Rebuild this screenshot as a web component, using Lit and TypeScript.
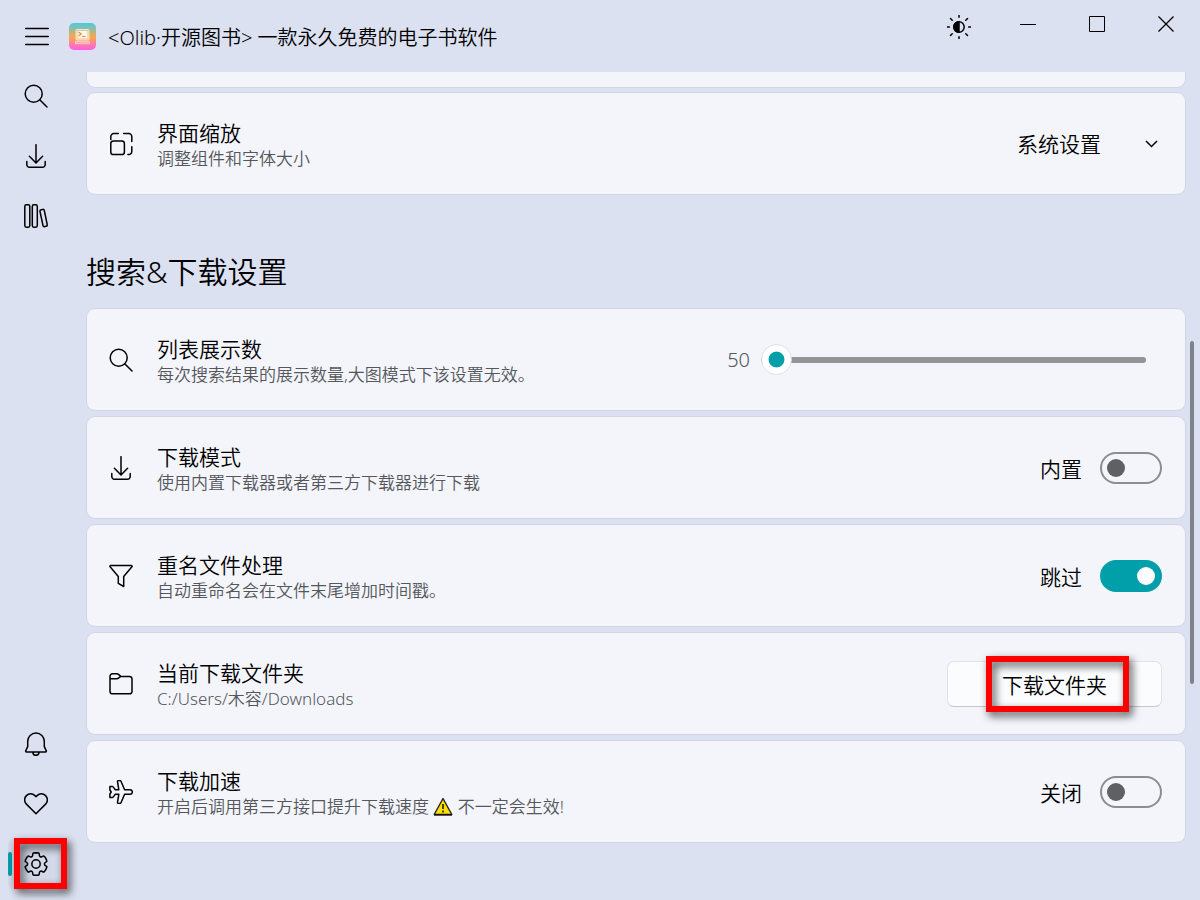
import { LitElement, html, svg, css, nothing } from "lit";
import { customElement, property, state } from "lit/decorators.js";
import { classMap } from "lit/directives/class-map.js";

const GEAR =
  "M12 2.25c.74 0 1.47.1 2.18.25.32.07.55.33.59.65l.17 1.53a1.38 1.38 0 0 0 1.92 1.11l1.4-.61a.75.75 0 0 1 .85.17 9.8 9.8 0 0 1 2.2 3.8c.1.3 0 .63-.27.83l-1.24.92a1.38 1.38 0 0 0 0 2.22l1.24.91c.26.2.37.53.27.83a9.8 9.8 0 0 1-2.2 3.8.75.75 0 0 1-.85.17l-1.4-.62a1.38 1.38 0 0 0-1.92 1.12l-.17 1.52a.75.75 0 0 1-.57.65 9.52 9.52 0 0 1-4.4 0 .75.75 0 0 1-.57-.65l-.17-1.52a1.38 1.38 0 0 0-1.92-1.12l-1.4.62a.75.75 0 0 1-.85-.17 9.8 9.8 0 0 1-2.2-3.8c-.1-.3 0-.63.27-.83l1.24-.91a1.38 1.38 0 0 0 0-2.22l-1.24-.92c-.27-.2-.37-.53-.27-.83a9.8 9.8 0 0 1 2.2-3.8.75.75 0 0 1 .85-.17l1.4.61a1.38 1.38 0 0 0 1.92-1.11l.17-1.53c.04-.32.27-.58.59-.65.71-.15 1.44-.24 2.18-.25z";

const ICONS: Record<string, unknown> = {
  menu: svg`<path d="M.7 4.500h22.600M.7 12.500h22.600M.7 20.500h22.600"/>`,
  search: svg`<circle cx="9.700" cy="9.700" r="8.500"/><path d="M16 16l7 7"/>`,
  download: svg`<path d="M12 .7v18.400M5.400 12.300l6.600 6.800 6.600-6.800M2.800 17.500v3.100a2.600 2.600 0 0 0 2.600 2.600h13.200a2.600 2.600 0 0 0 2.600-2.600v-3.100"/>`,
  library: svg`<rect x=".8" y=".8" width="5" height="22.400" rx="1.600"/><rect x="8.300" y=".8" width="5" height="22.400" rx="1.600"/><path d="M17.100 5.700l1.600-.3a1.400 1.400 0 0 1 1.600 1.100l2.900 14a1.500 1.500 0 0 1-1.100 1.800l-1.300.3a1.500 1.500 0 0 1-1.800-1.100L16 7.500a1.500 1.500 0 0 1 1.100-1.800z"/>`,
  bell: svg`<path d="M12 1a8.300 8.300 0 0 0-8.300 8.300v5.400l-2 4.100a.8.8 0 0 0 .7 1.100h19.200a.8.8 0 0 0 .7-1.100l-2-4.100V9.300A8.300 8.300 0 0 0 12 1zM8.900 20.200a3.100 3.100 0 0 0 6.200 0"/>`,
  heart: svg`<path d="M12 21.800L2.400 12.100a6 6 0 0 1 0-8.500 6 6 0 0 1 8.500 0L12 4.700l1.100-1.100a6 6 0 0 1 8.500 8.500z"/>`,
  gear: svg`<g transform="translate(-1.9 -1.9) scale(1.16)"><path d=${GEAR} stroke-width="1.3"/><circle cx="12" cy="12" r="3.6" stroke-width="1.3"/></g>`,
  scale: svg`<path d="M1.800 7.600V4.600a3 3 0 0 1 3-3h4.600M14.600 1.600h5.200a3 3 0 0 1 3 3v4.800M22.800 14.800v4.800a3 3 0 0 1-3 3h-.9"/><rect x="1.800" y="9" width="13.600" height="13.600" rx="2.600"/>`,
  filter: svg`<path d="M1.700 1.500h20.600a.8.8 0 0 1 .6 1.300l-8.200 9.600v10.100l-5.400-3.200v-6.900L1.100 2.800a.8.8 0 0 1 .6-1.300z"/>`,
  folder: svg`<path d="M1 6.200V4.400a2.600 2.600 0 0 1 2.600-2.600h4.200a2.600 2.600 0 0 1 1.700.6l2.300 2h8.600A2.600 2.600 0 0 1 23 7v12.200a2.600 2.600 0 0 1-2.600 2.600H3.600A2.600 2.600 0 0 1 1 19.200zM1 6.800h6.800a2.600 2.600 0 0 0 1.700-.6l2.200-1.800"/>`,
  plane: svg`<path d="M8.500 1.700a.9.9 0 0 1 .9-1.100h1.300a1.500 1.500 0 0 1 1.400.9l3.500 8.200h5.400a2.300 2.300 0 0 1 0 4.600h-5.400l-3.500 8.200a1.500 1.500 0 0 1-1.400.9H9.400a.9.9 0 0 1-.9-1.100l1.300-8H6.300l-2.200 2.800a1 1 0 0 1-.8.4H.9V14l1.300-2-1.300-2V6.500h2.400a1 1 0 0 1 .8.4l2.200 2.800h3.500z"/>`,
  theme: svg`<circle cx="12" cy="12" r="5.200"/><path d="M12 6.800a5.200 5.200 0 0 0 0 10.400z" fill="currentColor"/><path d="M12 .3v2M12 21.700v2M.3 12h2M21.700 12h2M3.500 3.500l1.700 1.700M18.800 18.800l1.700 1.700M3.500 20.500l1.700-1.700M18.800 5.200l1.700-1.700"/>`,
};

const icon = (name: string) => html`<svg class="icon" viewBox="0 0 24 24" width="24" height="24" fill="none" stroke="currentColor" stroke-width="1.5" stroke-linecap="round" stroke-linejoin="round" aria-hidden="true">${ICONS[name]}</svg>`;

@customElement("setting-card")
class SettingCard extends LitElement {
  @property() icon = "";
  @property() heading = "";
  @property() control = "";

  static styles = css`
    :host {
      display: flex;
      align-items: center;
      gap: 24px;
      min-height: 103px;
      box-sizing: border-box;
      padding: 0 23px 0 22px;
      border: 1px solid #d2d6e2;
      border-radius: 9px;
      background: #f3f5fb;
    }
    .icon { display: block; flex: none; }
    .texts { flex: 1; min-width: 0; padding-top: 3px; }
    .title { display: block; font-size: 21px; line-height: 26px; }
    .detail { margin: 0; font-size: 17px; line-height: 25px; color: #55575c; }
  `;

  render() {
    return html`
      ${icon(this.icon)}
      <div class="texts">
        <label class="title" for=${this.control || nothing}>${this.heading}</label>
        <p class="detail"><slot name="detail"></slot></p>
      </div>
      <slot></slot>
    `;
  }
}

@customElement("app-root")
class AppRoot extends LitElement {
  @state() private count = 50;
  @state() private external = false;
  @state() private skip = true;
  @state() private boost = false;

  static styles = css`
    :host {
      display: grid;
      grid-template: 72px minmax(0, 1fr) / 72px minmax(0, 1fr);
      height: 100vh;
      background: #dce1f1;
      color: #000;
      font-family: "Noto Sans", "Noto Sans CJK SC", sans-serif;
      font-weight: 350;
    }
    button, select, input { font: inherit; color: inherit; margin: 0; }
    button { border: 0; background: none; padding: 0; cursor: pointer; }
    .icon { display: block; }

    .bar { grid-column: 1 / -1; display: flex; align-items: flex-start; }
    .menu { width: 73px; height: 72px; display: grid; place-items: center; }
    .brand { flex: 1; height: 72px; display: flex; align-items: center; gap: 12px; min-width: 0; }
    .logo { margin-left: -4px; flex: none; display: block; }
    .name { margin: 0; font-size: 20px; font-weight: inherit; white-space: nowrap; }
    .win { width: 69px; height: 48px; display: grid; place-items: center; }
    .win.theme { height: 54px; }

    nav { display: flex; flex-direction: column; align-items: center; gap: 8px; padding-bottom: 10px; }
    .item { position: relative; width: 57px; height: 52px; border-radius: 8px; display: grid; place-items: center; }
    .item:first-child { margin-top: -2px; }
    .item.push { margin-top: auto; }
    .item.active { background: #d3d9e8; }
    .item.active::before {
      content: "";
      position: absolute;
      left: 0;
      top: 14px;
      width: 4px;
      height: 24px;
      border-radius: 2px;
      background: #009faa;
    }
    .mark {
      position: absolute;
      box-sizing: border-box;
      border: 6px solid #f00;
      filter: drop-shadow(3px 4px 4px rgba(0, 0, 0, 0.7));
      pointer-events: none;
    }
    .item .mark { inset: 0 -2px 1px 6px; }
    .folder .mark { inset: -5px 33px -5px 39px; }

    main { position: relative; overflow: hidden; padding: 0 14px; }
    .list { display: flex; flex-direction: column; gap: 5px; }
    .tail {
      height: 16px;
      box-sizing: border-box;
      border: 1px solid #d2d6e2;
      border-top: 0;
      border-radius: 0 0 9px 9px;
      background: #f3f5fb;
      margin-bottom: 4px;
    }
    h2 { margin: 57px 0 16px; font-size: 30px; line-height: 40px; font-weight: inherit; }
    .thumb {
      position: absolute;
      right: 6px;
      top: 269px;
      width: 4px;
      height: 343px;
      border-radius: 2px;
      background: #7f828b;
    }

    .pick { position: relative; }
    select {
      appearance: none;
      width: 145px;
      height: 46px;
      border: 0;
      padding: 0;
      background: none;
      font-size: 21px;
    }
    .chevron { position: absolute; right: 4px; top: 50%; margin-top: -4px; pointer-events: none; }

    .range { display: flex; align-items: center; gap: 11px; margin-right: 16px; }
    output { font-size: 20px; color: #55575c; }
    input[type="range"] {
      appearance: none;
      width: 385px;
      height: 32px;
      background: none;
    }
    input[type="range"]::-webkit-slider-runnable-track {
      height: 6px;
      border-radius: 3px;
      background: #929498;
    }
    input[type="range"]::-webkit-slider-thumb {
      appearance: none;
      width: 31px;
      height: 31px;
      margin-top: -13px;
      box-sizing: border-box;
      border: 1px solid #dfe1e5;
      border-radius: 50%;
      background: radial-gradient(circle, #009faa 7.5px, #fff 8.3px);
    }

    .toggle { display: flex; align-items: center; gap: 18px; font-size: 21px; }
    .toggle input {
      appearance: none;
      width: 62px;
      height: 32px;
      box-sizing: border-box;
      border: 2px solid #8b8d92;
      border-radius: 16px;
      padding: 0 5px;
      display: flex;
      align-items: center;
    }
    .toggle input::before {
      content: "";
      width: 18px;
      height: 18px;
      border-radius: 50%;
      background: #5e6064;
    }
    .toggle input:checked { background: #009faa; border-color: #009faa; justify-content: flex-end; }
    .toggle input:checked::before { background: #fff; }

    .folder { position: relative; display: flex; }
    .push-button {
      width: 215px;
      height: 46px;
      box-sizing: border-box;
      border: 1px solid #e0e2e7;
      border-bottom-color: #c4c6cb;
      border-radius: 7px;
      background: #fbfcfe;
      font-size: 21px;
    }
    .warn { vertical-align: -3px; }
  `;

  private toggle(id: string, text: string, on: boolean, change: (v: boolean) => void) {
    return html`<label class="toggle">${text}
      <input id=${id} type="checkbox" role="switch" .checked=${on}
        @change=${(e: Event) => change((e.target as HTMLInputElement).checked)} /></label>`;
  }

  private navItem(name: string, label: string, push = false, active = false) {
    return html`<button class=${classMap({ item: true, push, active })} aria-label=${label}>
      ${icon(name)}${active ? html`<span class="mark"></span>` : nothing}
    </button>`;
  }

  render() {
    return html`
      <header class="bar">
        <button class="menu" aria-label="菜单">${icon("menu")}</button>
        <div class="brand">
          <svg class="logo" width="27" height="27" viewBox="0 0 27 27" aria-hidden="true">
            <defs><linearGradient id="g" x1="0" y1="0" x2="0" y2="1">
              <stop offset="0" stop-color="#45cce4" /><stop offset=".52" stop-color="#fba64c" /><stop offset="1" stop-color="#fd5cea" />
            </linearGradient></defs>
            <rect width="27" height="27" rx="5" fill="url(#g)" />
            <rect x="7" y="6.500" width="13" height="10.500" rx="1" fill="#fff" fill-opacity=".35" stroke="#fdf3dc" stroke-opacity=".8" />
            <rect x="8.500" y="8" width="10" height="7.500" fill="#fdf6e4" />
            <path d="M9.500 9l2.700 2-2.700 2M13 13.500h3.500" fill="none" stroke="#e2913a" stroke-width="1.200" />
            <rect x="6.500" y="18.200" width="14" height="2.600" fill="#fff" fill-opacity=".3" stroke="#fde3d6" stroke-width=".6" />
          </svg>
          <h1 class="name">&lt;Olib·开源图书&gt; 一款永久免费的电子书软件</h1>
        </div>
        <button class="win theme" aria-label="主题">${icon("theme")}</button>
        <button class="win" aria-label="最小化"><svg width="16" height="16" stroke="#000"><path d="M0 8.500h16" /></svg></button>
        <button class="win" aria-label="最大化"><svg width="16" height="16" stroke="#000" fill="none"><path d="M.5 .5h15v15h-15z" /></svg></button>
        <button class="win" aria-label="关闭窗口"><svg width="16" height="16" stroke="#000" stroke-width="1.300"><path d="M.5 .5l15 15M15.500 .5l-15 15" /></svg></button>
      </header>
      <nav>
        ${this.navItem("search", "搜索")}
        ${this.navItem("download", "下载")}
        ${this.navItem("library", "书库")}
        ${this.navItem("bell", "通知", true)}
        ${this.navItem("heart", "收藏")}
        ${this.navItem("gear", "设置", false, true)}
      </nav>
      <main>
        <div class="tail"></div>
        <setting-card icon="scale" heading="界面缩放">
          <span slot="detail">调整组件和字体大小</span>
          <div class="pick">
            <select aria-label="界面缩放"><option>系统设置</option></select>
            <svg class="chevron" width="13" height="8" fill="none" stroke="#000" stroke-width="1.500" aria-hidden="true"><path d="M1 1l5.500 5.500L12 1" /></svg>
          </div>
        </setting-card>
        <h2>搜索&amp;下载设置</h2>
        <div class="list">
          <setting-card icon="search" heading="列表展示数">
            <span slot="detail">每次搜索结果的展示数量,大图模式下该设置无效。</span>
            <div class="range">
              <output for="count">${this.count}</output>
              <input id="count" type="range" aria-label="列表展示数" min="50" max="100" .value=${String(this.count)}
                @input=${(e: Event) => (this.count = +(e.target as HTMLInputElement).value)} />
            </div>
          </setting-card>
          <setting-card icon="download" heading="下载模式">
            <span slot="detail">使用内置下载器或者第三方下载器进行下载</span>
            ${this.toggle("mode", "内置", this.external, (v) => (this.external = v))}
          </setting-card>
          <setting-card icon="filter" heading="重名文件处理">
            <span slot="detail">自动重命名会在文件末尾增加时间戳。</span>
            ${this.toggle("skip", "跳过", this.skip, (v) => (this.skip = v))}
          </setting-card>
          <setting-card icon="folder" heading="当前下载文件夹">
            <span slot="detail">C:/Users/木容/Downloads</span>
            <div class="folder">
              <button class="push-button">下载文件夹</button>
              <span class="mark"></span>
            </div>
          </setting-card>
          <setting-card icon="plane" heading="下载加速">
            <span slot="detail">开启后调用第三方接口提升下载速度
              <svg class="warn" width="20" height="19" viewBox="0 0 20 19" role="img" aria-label="警告"><path d="M10 1.500L18.800 17.500H1.200z" fill="#ffde00" stroke="#222" stroke-width="1.400" stroke-linejoin="round" /><path d="M1 17.800h18" stroke="#111" stroke-width="1.600" /><path d="M10 7v5M10 13.500v2" stroke="#111" stroke-width="1.500" /></svg>
              不一定会生效!</span>
            ${this.toggle("boost", "关闭", this.boost, (v) => (this.boost = v))}
          </setting-card>
        </div>
        <div class="thumb"></div>
      </main>
    `;
  }
}
